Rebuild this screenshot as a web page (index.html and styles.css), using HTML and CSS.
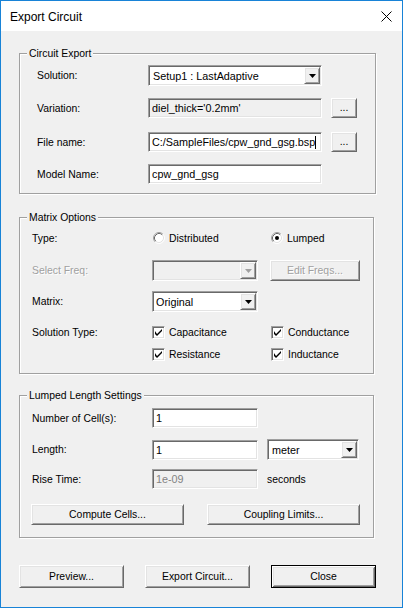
FILE: index.html
```html
<!DOCTYPE html>
<html>
<head>
<meta charset="utf-8">
<title>Export Circuit</title>
<link rel="stylesheet" href="styles.css">
</head>
<body>
<div class="window">
  <div class="titlebar">
    <span class="title">Export Circuit</span>
    <svg class="close" width="11" height="11" viewBox="0 0 11 11"><path d="M0.5 0.5 L10.5 10.5 M10.5 0.5 L0.5 10.5" stroke="#000" stroke-width="1" fill="none"/></svg>
  </div>
  <div class="content">
    <div class="group g1">
      <span class="legend">Circuit Export</span>
      <div class="row h21">
        <span class="label">Solution:</span>
        <div class="combo sunken w174">
          <span class="combo-text">Setup1 : LastAdaptive</span>
          <span class="drop raised"><svg width="7" height="4" viewBox="0 0 7 4"><path d="M0 0H7L3.5 4Z" fill="#000"/></svg></span>
        </div>
      </div>
      <div class="row mt12">
        <span class="label">Variation:</span>
        <div class="field sunken readonly w174">diel_thick='0.2mm'</div>
        <button class="btn raised dots">...</button>
      </div>
      <div class="row mt14">
        <span class="label">File name:</span>
        <div class="field sunken w174">C:/SampleFiles/cpw_gnd_gsg.bsp<span class="caret"></span></div>
        <button class="btn raised dots">...</button>
      </div>
      <div class="row mt12">
        <span class="label">Model Name:</span>
        <div class="field sunken w174">cpw_gnd_gsg</div>
      </div>
    </div>

    <div class="group g2">
      <span class="legend">Matrix Options</span>
      <div class="row">
        <span class="label">Type:</span>
        <div class="c1">
          <span class="opt">
            <svg class="radio" width="12" height="12" viewBox="0 0 12 12"><circle cx="6" cy="6" r="5" fill="#fff"/><path d="M2.11 9.89A5.5 5.5 0 0 1 9.89 2.11" stroke="#a0a0a0" fill="none"/><path d="M9.89 2.11A5.5 5.5 0 0 1 2.11 9.89" stroke="#fff" fill="none"/><path d="M2.82 9.18A4.5 4.5 0 0 1 9.18 2.82" stroke="#696969" fill="none"/><path d="M9.18 2.82A4.5 4.5 0 0 1 2.82 9.18" stroke="#e3e3e3" fill="none"/></svg>
            Distributed
          </span>
        </div>
        <span class="opt">
          <svg class="radio" width="12" height="12" viewBox="0 0 12 12"><circle cx="6" cy="6" r="5" fill="#fff"/><path d="M2.11 9.89A5.5 5.5 0 0 1 9.89 2.11" stroke="#a0a0a0" fill="none"/><path d="M9.89 2.11A5.5 5.5 0 0 1 2.11 9.89" stroke="#fff" fill="none"/><path d="M2.82 9.18A4.5 4.5 0 0 1 9.18 2.82" stroke="#696969" fill="none"/><path d="M9.18 2.82A4.5 4.5 0 0 1 2.82 9.18" stroke="#e3e3e3" fill="none"/><circle cx="6" cy="6" r="2" fill="#000"/></svg>
          Lumped
        </span>
      </div>
      <div class="row h21 mt12">
        <span class="label disabled">Select Freq:</span>
        <div class="c1">
          <div class="combo sunken readonly w106">
            <span class="combo-text"></span>
            <span class="drop raised"><svg width="7" height="4" viewBox="0 0 7 4"><path d="M0 0H7L3.5 4Z" fill="#a0a0a0"/></svg></span>
          </div>
        </div>
        <button class="btn raised disabled w90">Edit Freqs...</button>
      </div>
      <div class="row h21 mt10">
        <span class="label">Matrix:</span>
        <div class="combo sunken w106">
          <span class="combo-text small">Original</span>
          <span class="drop raised"><svg width="7" height="4" viewBox="0 0 7 4"><path d="M0 0H7L3.5 4Z" fill="#000"/></svg></span>
        </div>
      </div>
      <div class="row mt10">
        <span class="label">Solution Type:</span>
        <div class="c1">
          <span class="opt"><span class="check sunken"><svg width="7" height="7" viewBox="0 0 7 7"><path d="M0 2V5L2 7L7 2V0L2 5Z" fill="#000"/></svg></span>Capacitance</span>
        </div>
        <span class="opt cb2"><span class="check sunken"><svg width="7" height="7" viewBox="0 0 7 7"><path d="M0 2V5L2 7L7 2V0L2 5Z" fill="#000"/></svg></span>Conductance</span>
      </div>
      <div class="row mt2">
        <span class="label"></span>
        <div class="c1">
          <span class="opt"><span class="check sunken"><svg width="7" height="7" viewBox="0 0 7 7"><path d="M0 2V5L2 7L7 2V0L2 5Z" fill="#000"/></svg></span>Resistance</span>
        </div>
        <span class="opt cb2"><span class="check sunken"><svg width="7" height="7" viewBox="0 0 7 7"><path d="M0 2V5L2 7L7 2V0L2 5Z" fill="#000"/></svg></span>Inductance</span>
      </div>
    </div>

    <div class="group g3">
      <span class="legend">Lumped Length Settings</span>
      <div class="row">
        <span class="label">Number of Cell(s):</span>
        <div class="field sunken w106">1</div>
      </div>
      <div class="row h21 mt11">
        <span class="label">Length:</span>
        <div class="field sunken w106 h20">1</div>
        <div class="combo sunken w92 ml9">
          <span class="combo-text">meter</span>
          <span class="drop raised"><svg width="7" height="4" viewBox="0 0 7 4"><path d="M0 0H7L3.5 4Z" fill="#000"/></svg></span>
        </div>
      </div>
      <div class="row mt9">
        <span class="label">Rise Time:</span>
        <div class="field sunken readonly grey w106">1e-09</div>
        <span class="ml9">seconds</span>
      </div>
      <div class="row h21 mt15">
        <button class="btn raised w153 mlm1">Compute Cells...</button>
        <button class="btn raised w153 ml23">Coupling Limits...</button>
      </div>
    </div>

    <div class="footer">
      <button class="btn raised big">Preview...</button>
      <button class="btn raised big">Export Circuit...</button>
      <button class="btn big default">Close</button>
    </div>
  </div>
</div>
</body>
</html>
```

FILE: styles.css
```css
* { box-sizing: border-box; }
html, body { margin: 0; padding: 0; }
body {
  width: 403px;
  height: 608px;
  font-family: "Liberation Sans", Arial, sans-serif;
  font-size: 10.4px;
  color: #000;
  background: #f0f0f0;
  overflow: hidden;
}
.window {
  width: 403px;
  height: 608px;
  border: 1px solid #1883d7;
  background: #f0f0f0;
  display: flex;
  flex-direction: column;
}
.titlebar {
  height: 30px;
  flex-shrink: 0;
  background: #fff;
  display: flex;
  align-items: center;
  justify-content: space-between;
  padding: 1px 10px 0 9px;
}
.title { font-size: 12px; }
.close { display: block; }
.content {
  display: flex;
  flex-direction: column;
  padding: 22px 0 0 18px;
}
.group {
  position: relative;
  border: 1px solid #a0a0a0;
  box-shadow: 1px 1px 0 #fff, inset 1px 1px 0 #fff;
  display: flex;
  flex-direction: column;
}
.g1 { width: 357px; padding: 11px 0 9px 17px; }
.g2 { width: 355px; margin-top: 23px; padding: 10px 0 9px 12px; }
.g3 { width: 355px; margin-top: 21px; padding: 12px 0 12px 12px; }
.legend {
  position: absolute;
  top: -7px;
  left: 7px;
  padding: 0 2px;
  line-height: 13px;
  background: #f0f0f0;
}
.row {
  display: flex;
  align-items: center;
  height: 20px;
  flex-shrink: 0;
}
.h21 { height: 21px; }
.label { flex-shrink: 0; }
.g1 .label { width: 111px; }
.g2 .label, .g3 .label { width: 120px; }
.disabled { color: #a0a0a0; text-shadow: 1px 1px 0 #fff; }

.sunken {
  border: 1px solid;
  border-color: #a0a0a0 #fff #fff #a0a0a0;
  box-shadow: inset 1px 1px 0 #696969, inset -1px -1px 0 #e3e3e3;
  background: #fff;
}
.raised {
  border: 1px solid;
  border-color: #fff #696969 #696969 #fff;
  box-shadow: inset 1px 1px 0 #e3e3e3, inset -1px -1px 0 #a0a0a0;
  background: #f0f0f0;
}
.readonly { background: #f0f0f0; }
.grey { color: #838383; }

.field {
  height: 20px;
  font-size: 10.8px;
  display: flex;
  align-items: center;
  padding: 0 2px 0 3px;
  white-space: nowrap;
  overflow: hidden;
}
.caret {
  display: inline-block;
  width: 1px;
  height: 13px;
  background: #000;
}
.combo {
  height: 21px;
  padding: 1px;
  display: flex;
  align-items: center;
}
.combo-text {
  flex: 1;
  font-size: 10.8px;
  padding-left: 3px;
  white-space: nowrap;
  overflow: hidden;
}
.combo-text.small { padding-left: 2px; }
.drop {
  width: 16px;
  height: 17px;
  flex-shrink: 0;
  display: flex;
  align-items: center;
  justify-content: center;
}
.drop svg { display: block; }

.btn {
  font: inherit;
  color: #000;
  margin: 0;
  padding: 0;
  height: 21px;
  display: flex;
  align-items: center;
  justify-content: center;
  flex-shrink: 0;
}
.btn.disabled { color: #a0a0a0; }
.dots { width: 26px; height: 20px; margin-left: 9px; padding-bottom: 2px; }

.c1 { width: 118px; flex-shrink: 0; display: flex; align-items: center; }
.opt { display: flex; align-items: center; gap: 4px; }
.radio { display: block; margin-left: 1px; }
.cb2 { margin-left: 1px; }
.check {
  width: 13px;
  height: 13px;
  display: flex;
  align-items: center;
  justify-content: center;
  flex-shrink: 0;
}
.check svg { display: block; }

.footer {
  display: flex;
  gap: 21px;
  margin-top: 27px;
}
.big { width: 105px; height: 23px; }
.default {
  border: 1px solid #000;
  background: #f0f0f0;
  box-shadow: inset 1px 1px 0 #fff, inset -1px -1px 0 #696969, inset 2px 2px 0 #e3e3e3, inset -2px -2px 0 #a0a0a0;
}

/* sizing and spacing utilities (after component rules so they win) */
.w174 { width: 174px; }
.w106 { width: 106px; }
.w92 { width: 92px; }
.w90 { width: 90px; }
.w153 { width: 153px; }
.h20 { height: 20px; }
.mt2 { margin-top: 2px; }
.mt9 { margin-top: 9px; }
.mt10 { margin-top: 10px; }
.mt11 { margin-top: 11px; }
.mt12 { margin-top: 12px; }
.mt14 { margin-top: 14px; }
.mt15 { margin-top: 15px; }
.ml9 { margin-left: 9px; }
.ml23 { margin-left: 23px; }
.mlm1 { margin-left: -1px; }
```
